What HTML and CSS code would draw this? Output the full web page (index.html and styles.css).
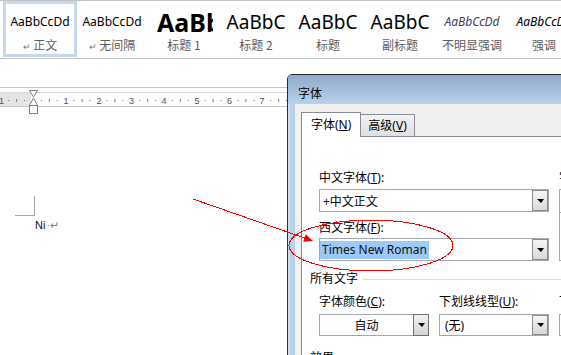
FILE: index.html
```html
<!DOCTYPE html>
<html lang="zh-CN">
<head>
    <meta charset="UTF-8">
    <title>字体</title>
    <link rel="stylesheet" href="styles.css">
</head>
<body>

    <!-- 样式库 -->
    <div class="gallery">
        <div class="style-item selected">
            <div class="sample s-normal">AaBbCcDd</div>
            <div class="style-name"><span class="ret">↵</span> 正文</div>
        </div>
        <div class="style-item">
            <div class="sample s-normal">AaBbCcDd</div>
            <div class="style-name"><span class="ret">↵</span> 无间隔</div>
        </div>
        <div class="style-item">
            <div class="sample s-h1">AaBb</div>
            <div class="style-name">标题 1</div>
        </div>
        <div class="style-item">
            <div class="sample s-h2">AaBbC</div>
            <div class="style-name">标题 2</div>
        </div>
        <div class="style-item">
            <div class="sample s-h2">AaBbC</div>
            <div class="style-name">标题</div>
        </div>
        <div class="style-item">
            <div class="sample s-h2">AaBbC</div>
            <div class="style-name">副标题</div>
        </div>
        <div class="style-item">
            <div class="sample s-em-light">AaBbCcDd</div>
            <div class="style-name">不明显强调</div>
        </div>
        <div class="style-item">
            <div class="sample s-em">AaBbCcDd</div>
            <div class="style-name">强调</div>
        </div>
    </div>

    <!-- 标尺 -->
    <svg class="ruler" width="561" height="28" viewBox="0 87 561 28" shape-rendering="crispEdges">
        <defs>
            <pattern id="ticks" x="0.25" y="0" width="32.75" height="120" patternUnits="userSpaceOnUse">
                <rect x="8" y="100" width="1" height="1" fill="#7a7a7a"/>
                <rect x="16" y="99" width="1" height="3" fill="#7a7a7a"/>
                <rect x="24" y="100" width="1" height="1" fill="#7a7a7a"/>
            </pattern>
        </defs>
        <line x1="0" y1="87.5" x2="561" y2="87.5" stroke="#c6c6c6"/>
        <rect x="0" y="92" width="31" height="14" fill="#e4e4e4"/>
        <line x1="0" y1="92.5" x2="561" y2="92.5" stroke="#dcdcdc"/>
        <line x1="0" y1="106.5" x2="561" y2="106.5" stroke="#c6c6c6"/>
        <rect x="0" y="97" width="561" height="6" fill="url(#ticks)"/>
        <g class="ruler-num">
            <text x="1.5" y="103.5">1</text>
            <text x="66" y="103.5">1</text>
            <text x="99" y="103.5">2</text>
            <text x="131.5" y="103.5">3</text>
            <text x="164" y="103.5">4</text>
            <text x="197" y="103.5">5</text>
            <text x="229.5" y="103.5">6</text>
            <text x="262" y="103.5">7</text>
        </g>
        <g fill="#fff" stroke="#808080" shape-rendering="auto">
            <path d="M29.5 90.5 H37.5 L33.5 97 Z"/>
            <path d="M33.5 98 L37.5 105.5 H29.5 Z"/>
            <rect x="29.5" y="105.5" width="8" height="8"/>
        </g>
    </svg>

    <!-- 文档区 -->
    <div class="doc">
        <div class="crop-mark"></div>
        <div class="para">Ni<span class="fmt">·↵</span></div>
    </div>

    <!-- 字体对话框 -->
    <div class="dialog">
        <div class="dlg-title">字体</div>
        <div class="dlg-frame">
            <div class="dlg-band"></div>
            <div class="dlg-body">
                <div class="tabs">
                    <div class="tab active">字体(<u>N</u>)</div>
                    <div class="tab">高级(<u>V</u>)</div>
                </div>
                <div class="panel">
                    <div class="font-cols">
                        <div class="col-main">
                            <div class="lbl">中文字体(<u>T</u>):</div>
                            <div class="combo">
                                <span class="val">+中文正文</span>
                                <span class="drop"></span>
                            </div>
                            <div class="lbl lbl-2">西文字体(<u>F</u>):</div>
                            <div class="combo combo-2">
                                <span class="val val-sel"><span class="hl">Times New Roman</span></span>
                                <span class="drop"></span>
                            </div>
                        </div>
                        <div class="col-side">
                            <div class="lbl">字形(<u>Y</u>):</div>
                            <div class="listbox"><div class="lb-input"></div></div>
                        </div>
                    </div>

                    <div class="group">所有文字</div>
                    <div class="row3">
                        <div class="field">
                            <div class="lbl">字体颜色(<u>C</u>):</div>
                            <div class="color-pick">
                                <span class="val">自动</span>
                                <span class="btn"></span>
                            </div>
                        </div>
                        <div class="field">
                            <div class="lbl">下划线线型(<u>U</u>):</div>
                            <div class="combo combo-s">
                                <span class="val">(无)</span>
                                <span class="drop"></span>
                            </div>
                        </div>
                        <div class="field">
                            <div class="lbl">下划线颜色(<u>I</u>):</div>
                            <div class="combo combo-s">
                                <span class="val">自动</span>
                                <span class="drop"></span>
                            </div>
                        </div>
                    </div>
                    <div class="group group-2">效果</div>
                </div>
            </div>
        </div>
    </div>

    <!-- 红色标注 -->
    <svg class="annot" width="561" height="355" viewBox="0 0 561 355">
        <line x1="193" y1="199" x2="306" y2="238.5" stroke="#f00" stroke-width="1" shape-rendering="crispEdges"/>
        <polygon points="313,241 303.2,241.8 305.8,234.2" fill="#f00"/>
        <ellipse cx="371" cy="245.5" rx="82" ry="25.5" fill="none" stroke="#f00" stroke-width="1" shape-rendering="crispEdges"/>
    </svg>

</body>
</html>
```

FILE: styles.css
```css
/* --- 整体 --- */
html, body {
    margin: 0;
    width: 561px;
    height: 355px;
    overflow: hidden;
}

body {
    position: relative;
    background: #fff;
    font-family: "Noto Sans", "Noto Sans CJK SC", sans-serif;
    font-size: 12px;
    color: #000;
}

/* --- 样式库 --- */
.gallery {
    display: flex;
    height: 57px;
    padding-left: 4px;
    border-top: 1px solid #c4c4c4;
    border-bottom: 1px solid #c4c4c4;
    overflow: hidden;
}

.style-item {
    flex: none;
    width: 72px;
    height: 54px;
    margin-top: 1px;
    padding-top: 8px;
    box-sizing: border-box;
    display: flex;
    flex-direction: column;
    align-items: center;
    overflow: hidden;
}

.style-item.selected {
    box-shadow: inset 0 0 0 2px #c5d8f0, 0 0 0 1px #c5d8f0;
}

.sample {
    width: 100%;
    height: 24px;
    line-height: 24px;
    text-align: center;
    white-space: nowrap;
    font-family: "Noto Sans", sans-serif;
}

.s-normal { font-size: 12px; }

.s-h1 {
    align-self: flex-start;
    width: 65px;
    font-size: 25px;
    font-weight: bold;
    text-align: left;
    padding-left: 9px;
    box-sizing: border-box;
    overflow: hidden;
}

.s-h2 { font-size: 19px; }

.s-em-light {
    font-size: 12px;
    font-style: italic;
    color: #3f3f5a;
}

.s-em {
    font-size: 12px;
    font-style: italic;
}

.style-name {
    margin-top: 3px;
    font-family: "Noto Sans CJK SC", sans-serif;
    font-size: 12px;
    line-height: 16px;
    color: #5c5c5c;
    white-space: nowrap;
}

.ret {
    font-size: 9px;
    color: #777;
}

/* --- 标尺 --- */
.ruler {
    display: block;
    margin-top: 28px;
}

.ruler-num text {
    font-family: "Liberation Sans", sans-serif;
    font-size: 9px;
    fill: #505050;
    text-anchor: middle;
}

/* --- 文档 --- */
.doc {
    padding-top: 81px;
}

.crop-mark {
    width: 20px;
    height: 20px;
    margin-left: 15px;
    box-sizing: border-box;
    border-right: 1px solid #a6a6a6;
    border-bottom: 1px solid #a6a6a6;
}

.para {
    margin: 2px 0 0 35px;
    font-family: "Liberation Sans", sans-serif;
    font-size: 11px;
    line-height: 14px;
    color: #111;
}

.fmt {
    color: #8a8a8a;
    margin-left: 1px;
}

/* --- 对话框 --- */
.dialog {
    position: absolute;
    left: 287px;
    top: 74px;
    width: 420px;
    height: 320px;
    border: 1px solid #2d2d2d;
    border-radius: 5px 5px 0 0;
    background: #f0f0f0;
    overflow: hidden;
}

.dlg-title {
    height: 29px;
    box-sizing: border-box;
    padding: 10px 0 0 10px;
    line-height: 16px;
    font-family: "Noto Sans CJK SC", sans-serif;
    background: linear-gradient(#8eabcc, #b9d1ea);
}

.dlg-frame {
    display: flex;
    height: 100%;
}

.dlg-band {
    flex: none;
    width: 7px;
    background: linear-gradient(90deg, #d5e4f3, #bad1ea 40%);
}

.dlg-body {
    flex: 1;
    padding: 8px 0 0 6px;
}

.tabs {
    display: flex;
    align-items: flex-end;
    height: 24px;
}

.tab {
    height: 22px;
    padding: 0 7px;
    box-sizing: border-box;
    line-height: 21px;
    border: 1px solid #898c95;
    border-bottom: none;
    background: linear-gradient(#f3f3f3, #dfdfdf);
    margin-left: -1px;
    white-space: nowrap;
}

.tab.active {
    position: relative;
    z-index: 1;
    height: 25px;
    margin: 0 0 -1px 0;
    padding: 0 9px;
    line-height: 24px;
    background: #fff;
}

.panel {
    height: 300px;
    border: 1px solid #898c95;
    background: #fff;
    padding: 33px 0 0 17px;
}

.lbl {
    line-height: 16px;
    white-space: nowrap;
}

.lbl-2 { margin-top: 8px; }

.font-cols {
    display: flex;
    align-items: flex-start;
}

.col-main { width: 230px; flex: none; }

.col-side {
    width: 120px;
    flex: none;
    margin-left: 10px;
}

.combo {
    display: flex;
    height: 23px;
    margin-top: 3px;
    box-sizing: border-box;
    border: 1px solid #a3a8b0;
    background: #fff;
}

.combo-2 { margin-top: 2px; }

.combo .val {
    flex: 1;
    display: flex;
    align-items: center;
    padding-left: 3px;
    white-space: nowrap;
}

.combo .val-sel { padding-left: 0; }

.hl {
    padding: 0 2px;
    line-height: 18px;
    margin-top: 1px;
    background: #9ccaf6;
    color: #111;
}

.drop {
    flex: none;
    width: 16px;
    box-sizing: border-box;
    border: 1px solid #8c8c8c;
    background: linear-gradient(#f6f6f6, #d8d8d8);
    display: flex;
    align-items: center;
    justify-content: center;
}

.drop::after,
.btn::after {
    content: "";
    border-left: 4px solid transparent;
    border-right: 3px solid transparent;
    border-top: 4px solid #000;
}

.listbox {
    height: 72px;
    margin-top: 3px;
    box-sizing: border-box;
    border: 1px solid #a3a8b0;
}

.lb-input {
    height: 22px;
    border-bottom: 1px solid #a3a8b0;
}

.group {
    display: flex;
    align-items: center;
    margin: 10px 0 0 -9px;
    line-height: 16px;
}

.group::after {
    content: "";
    flex: 1;
    margin-left: 5px;
    border-top: 1px solid #d5dfe5;
}

.group-2 { margin-top: 14px; }

.row3 {
    display: flex;
    gap: 10px;
    margin-top: 7px;
}

.field { width: 110px; flex: none; }

.combo-s {
    height: 22px;
    margin-top: 4px;
}

.combo-s .val { padding-left: 5px; }

.color-pick {
    display: flex;
    height: 22px;
    margin-top: 4px;
}

.color-pick .val {
    flex: 1;
    display: flex;
    align-items: center;
    justify-content: center;
    border: 1px solid #a3a8b0;
    border-right: none;
}

.btn {
    flex: none;
    width: 16px;
    box-sizing: border-box;
    border: 1px solid #707070;
    background: linear-gradient(#f2f2f2, #d4d4d4);
    display: flex;
    align-items: center;
    justify-content: center;
}

/* --- 标注 --- */
.annot {
    position: absolute;
    left: 0;
    top: 0;
    z-index: 10;
    pointer-events: none;
}
```
